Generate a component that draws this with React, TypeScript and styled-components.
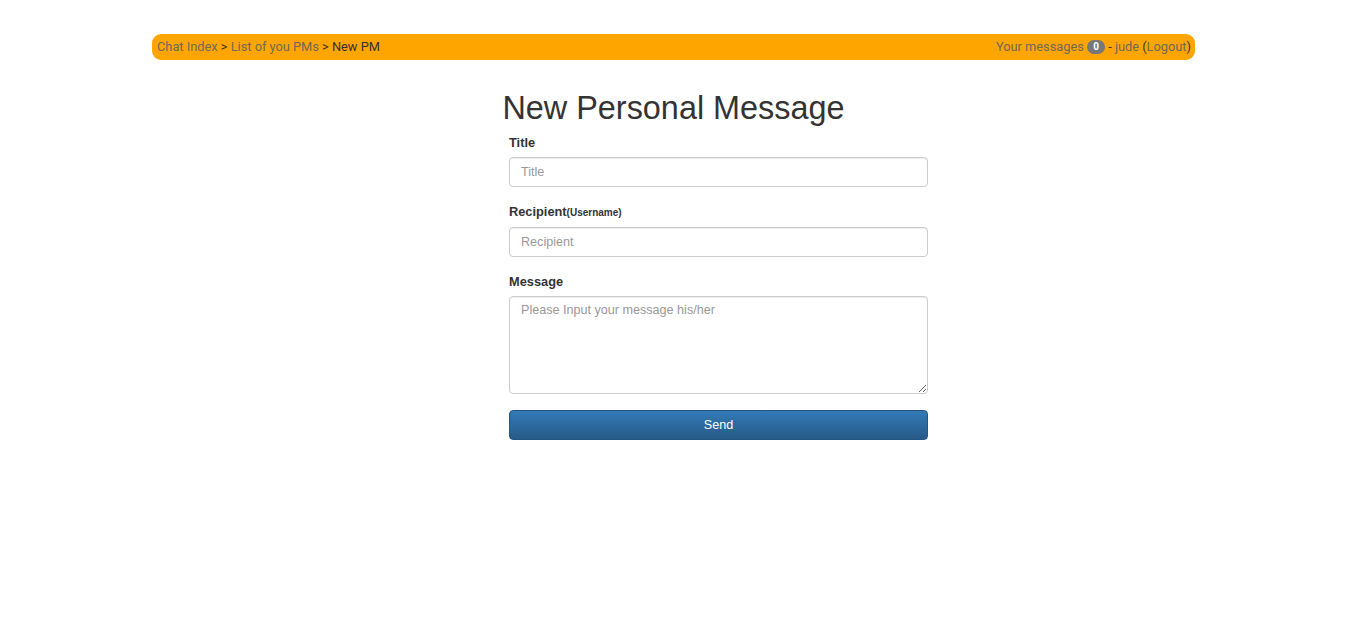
import { createGlobalStyle, styled } from "styled-components";

const GlobalStyle = createGlobalStyle`
  * {
    box-sizing: border-box;
  }
  body {
    margin: 0;
    background: #fff;
    color: #333;
    font-family: "Liberation Sans", Arial, sans-serif;
    font-size: 12.6px;
    line-height: 18px;
  }
`;

const App = () => {
  return (
    <Page>
      <GlobalStyle />
      <NavBar>
        <Crumbs>
          <NavLink href="#">Chat Index</NavLink> &gt;{" "}
          <NavLink href="#">List of you PMs</NavLink> &gt; New PM
        </Crumbs>
        <UserBox>
          <NavLink href="#">
            Your messages <Badge>0</Badge>
          </NavLink>{" "}
          - <NavLink href="#">jude</NavLink> (<NavLink href="#">Logout</NavLink>)
        </UserBox>
      </NavBar>

      <Heading>New Personal Message</Heading>

      <Form onSubmit={(e) => e.preventDefault()}>
        <Group>
          <Label htmlFor="title">Title</Label>
          <Input id="title" type="text" placeholder="Title" />
        </Group>
        <Group>
          <Label htmlFor="recipient">
            Recipient<Small>(Username)</Small>
          </Label>
          <Input id="recipient" type="text" placeholder="Recipient" />
        </Group>
        <Group>
          <Label htmlFor="message">Message</Label>
          <TextArea id="message" placeholder="Please Input your message his/her" />
        </Group>
        <SendButton type="submit">Send</SendButton>
      </Form>
    </Page>
  );
};

export default App;

const Page = styled.div`
  padding: 34px 156px 0 152px;
  min-height: 623px;
`;

const NavBar = styled.div`
  display: flex;
  justify-content: space-between;
  align-items: center;
  height: 26px;
  padding: 0 4px 0 5px;
  background: #ffa500;
  border-radius: 9px;
  font-family: Roboto, "Liberation Sans", sans-serif;
  font-size: 12.8px;
  color: #333;
`;

const Crumbs = styled.div`
  white-space: nowrap;
`;

const UserBox = styled.div`
  white-space: nowrap;
`;

const NavLink = styled.a`
  color: #6f6a5e;
  text-decoration: none;
`;

const Badge = styled.span`
  display: inline-block;
  min-width: 18px;
  padding: 2px 5px;
  border-radius: 7px;
  background: #777;
  color: #fff;
  font-size: 10px;
  font-weight: bold;
  line-height: 1;
  text-align: center;
  vertical-align: 1px;
`;

const Heading = styled.h1`
  margin: 30px 0 8px;
  font-size: 32.4px;
  font-weight: 500;
  line-height: 36px;
  text-align: center;
  color: #333;
`;

const Form = styled.form`
  width: 419px;
  margin-left: 357px;
`;

const Group = styled.div`
  margin-bottom: 16px;
`;

const Label = styled.label`
  display: block;
  margin-bottom: 5px;
  font-weight: bold;
  font-size: 12.8px;
  line-height: 18px;
`;

const Small = styled.small`
  font-size: 10px;
`;

const fieldStyles = `
  display: block;
  width: 100%;
  padding: 5px 11px;
  border: 1px solid #ccc;
  border-radius: 4px;
  background: #fff;
  color: #555;
  font-family: "Liberation Sans", Arial, sans-serif;
  font-size: 12.6px;
  line-height: 18px;
  box-shadow: inset 0 1px 1px rgba(0, 0, 0, 0.075);
  outline: none;
  &::placeholder {
    color: #999;
  }
`;

const Input = styled.input`
  ${fieldStyles}
  height: 30px;
`;

const TextArea = styled.textarea`
  ${fieldStyles}
  height: 98px;
  padding-top: 4px;
  resize: vertical;
`;

const SendButton = styled.button`
  display: block;
  width: 100%;
  height: 30px;
  margin-top: 1px;
  border: 1px solid #245580;
  border-radius: 4px;
  background-image: linear-gradient(to bottom, #337ab7 0, #265a88 100%);
  color: #fff;
  font-family: "Liberation Sans", Arial, sans-serif;
  font-size: 12.6px;
  cursor: pointer;
`;
